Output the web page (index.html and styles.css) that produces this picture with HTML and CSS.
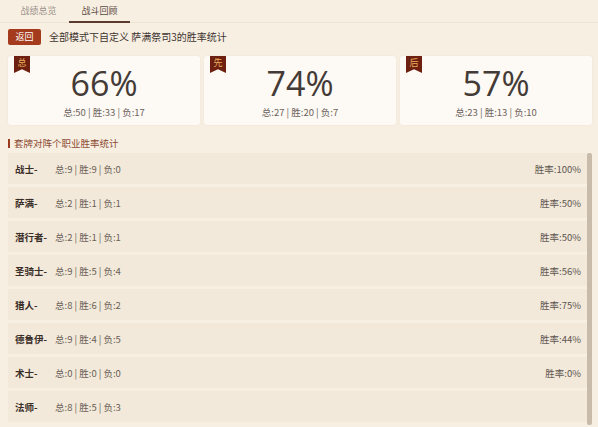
FILE: index.html
```html
<!DOCTYPE html>
<html lang="zh-CN">
<head>
    <meta charset="UTF-8">
    <meta name="viewport" content="width=device-width, initial-scale=1.0">
    <title>战斗回顾</title>
    <link rel="stylesheet" href="styles.css">
</head>
<body>
    <div class="tabs">
        <div class="tab">战绩总览</div>
        <div class="tab active">战斗回顾</div>
    </div>

    <div class="header">
        <div class="back-button">返回</div>
        <div class="header-title">全部模式下自定义 萨满祭司3的胜率统计</div>
    </div>

    <div class="cards">
        <div class="card">
            <div class="badge">总</div>
            <div class="rate">66%</div>
            <div class="card-stats">总:50 | 胜:33 | 负:17</div>
        </div>
        <div class="card">
            <div class="badge">先</div>
            <div class="rate">74%</div>
            <div class="card-stats">总:27 | 胜:20 | 负:7</div>
        </div>
        <div class="card">
            <div class="badge">后</div>
            <div class="rate">57%</div>
            <div class="card-stats">总:23 | 胜:13 | 负:10</div>
        </div>
    </div>

    <div class="section-title">套牌对阵个职业胜率统计</div>

    <div class="list-wrap">
        <div class="list">
            <div class="row"><span class="name">战士-</span><span class="stats">总:9 | 胜:9 | 负:0</span><span class="win">胜率:100%</span></div>
            <div class="row"><span class="name">萨满-</span><span class="stats">总:2 | 胜:1 | 负:1</span><span class="win">胜率:50%</span></div>
            <div class="row"><span class="name">潜行者-</span><span class="stats">总:2 | 胜:1 | 负:1</span><span class="win">胜率:50%</span></div>
            <div class="row"><span class="name">圣骑士-</span><span class="stats">总:9 | 胜:5 | 负:4</span><span class="win">胜率:56%</span></div>
            <div class="row"><span class="name">猎人-</span><span class="stats">总:8 | 胜:6 | 负:2</span><span class="win">胜率:75%</span></div>
            <div class="row"><span class="name">德鲁伊-</span><span class="stats">总:9 | 胜:4 | 负:5</span><span class="win">胜率:44%</span></div>
            <div class="row"><span class="name">术士-</span><span class="stats">总:0 | 胜:0 | 负:0</span><span class="win">胜率:0%</span></div>
            <div class="row"><span class="name">法师-</span><span class="stats">总:8 | 胜:5 | 负:3</span><span class="win"></span></div>
        </div>
        <div class="scrollbar"></div>
    </div>
</body>
</html>
```

FILE: styles.css
```css
* {
    margin: 0;
    padding: 0;
    box-sizing: border-box;
    font-family: 'Noto Sans CJK SC', 'Noto Sans', sans-serif;
}

body {
    background-color: #F8EFE3;
    height: 100vh;
    overflow: hidden;
    color: #4a3f3a;
}

.tabs {
    height: 23px;
    display: flex;
    padding-left: 8px;
    border-bottom: 1px solid #EFE3D3;
}

.tab {
    width: 61px;
    height: 23px;
    line-height: 22px;
    text-align: center;
    font-size: 9px;
    color: #9a918a;
}

.tab.active {
    color: #5a4a42;
    border-bottom: 2px solid #5a3a2c;
}

.header {
    display: flex;
    align-items: center;
    padding: 5px 8px 0;
    height: 22px;
}

.back-button {
    width: 33px;
    height: 16px;
    line-height: 16px;
    text-align: center;
    background-color: #A43B1C;
    color: #fff;
    font-size: 9px;
    border-radius: 2px;
}

.header-title {
    margin-left: 8px;
    font-size: 10px;
    color: #3e3430;
}

.cards {
    display: flex;
    gap: 4px;
    padding: 0 6px 0 8px;
    margin-top: 11px;
}

.card {
    flex: 1;
    height: 69px;
    background-color: #FDF9F4;
    border-radius: 3px;
    box-shadow: 0 0 2px rgba(180, 150, 110, 0.15);
    display: flex;
    flex-direction: column;
    align-items: center;
    position: relative;
}

.badge {
    position: absolute;
    left: 6px;
    top: 0;
    width: 16px;
    height: 17px;
    background-color: #6E2010;
    color: #E9AE5E;
    font-size: 9px;
    line-height: 13px;
    text-align: center;
    clip-path: polygon(0 0, 100% 0, 100% 100%, 50% 78%, 0 100%);
}

.rate {
    font-family: 'Open Sans', sans-serif;
    font-size: 34px;
    line-height: 40px;
    margin-top: 7px;
    color: #443a36;
}

.card-stats {
    font-size: 9.5px;
    color: #6c625c;
    margin-top: 2px;
}

.section-title {
    margin: 14px 0 0 8px;
    padding-left: 4px;
    border-left: 2px solid #9B3A1E;
    font-size: 9.5px;
    line-height: 9px;
    height: 9px;
    color: #8A4A32;
}

.list-wrap {
    display: flex;
    margin-top: 5px;
    padding-left: 8px;
}

.list {
    width: 579px;
    display: flex;
    flex-direction: column;
    gap: 3px;
}

.row {
    height: 31px;
    background-color: #F2E9DA;
    display: flex;
    align-items: center;
    padding: 0 6px 0 7px;
    font-size: 9.5px;
}

.name {
    width: 40px;
    font-weight: bold;
    color: #3a2e28;
}

.stats {
    color: #6a5f58;
}

.win {
    margin-left: auto;
    color: #5f5650;
}

.scrollbar {
    width: 5px;
    height: 272px;
    background-color: #C8BBA9;
    border-radius: 2px;
}
```
